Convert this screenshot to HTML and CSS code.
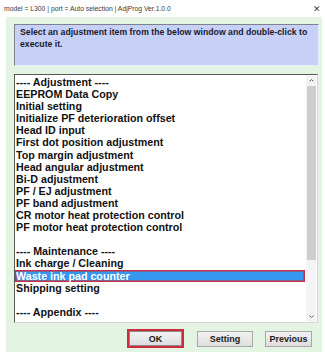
FILE: index.html
```html
<!DOCTYPE html>
<html>
<head>
<meta charset="utf-8">
<link rel="stylesheet" href="styles.css">
</head>
<body>
<div class="window">
  <div class="titlebar">
    <span class="title">model = L300 | port = Auto selection | AdjProg Ver.1.0.0</span>
    <span class="close">✕</span>
  </div>
  <div class="dialog">
    <div class="info">Select an adjustment item from the below window and double-click to execute it.</div>
    <div class="listbox">
      <ul class="items">
        <li>---- Adjustment ----</li>
        <li>EEPROM Data Copy</li>
        <li>Initial setting</li>
        <li>Initialize PF deterioration offset</li>
        <li>Head ID input</li>
        <li>First dot position adjustment</li>
        <li>Top margin adjustment</li>
        <li>Head angular adjustment</li>
        <li>Bi-D adjustment</li>
        <li>PF / EJ adjustment</li>
        <li>PF band adjustment</li>
        <li>CR motor heat protection control</li>
        <li>PF motor heat protection control</li>
        <li>&nbsp;</li>
        <li>---- Maintenance ----</li>
        <li>Ink charge / Cleaning</li>
        <li class="selected">Waste ink pad counter</li>
        <li>Shipping setting</li>
        <li>&nbsp;</li>
        <li>---- Appendix ----</li>
      </ul>
      <div class="scrollbar">
        <svg class="arrow" width="7" height="11" viewBox="0 0 7 11"><path d="M1.5 6.5 L3.5 4.5 L5.5 6.5" fill="none" stroke="#606060" stroke-width="1"/></svg>
        <div class="track"><div class="thumb"></div></div>
        <svg class="arrow" width="7" height="11" viewBox="0 0 7 11"><path d="M1.5 4.5 L3.5 6.5 L5.5 4.5" fill="none" stroke="#606060" stroke-width="1"/></svg>
      </div>
    </div>
    <div class="buttons">
      <div class="btn-outline"><button class="btn ok">OK</button></div>
      <button class="btn setting">Setting</button>
      <button class="btn previous">Previous</button>
    </div>
  </div>
</div>
</body>
</html>
```
FILE: styles.css
```css
html, body {
  margin: 0;
  padding: 0;
  background: #ffffff;
}
.window {
  width: 325px;
  height: 357px;
  overflow: hidden;
  font-family: "Liberation Sans", Arial, sans-serif;
}
.titlebar {
  height: 17px;
  display: flex;
  align-items: center;
  justify-content: space-between;
  padding: 0 4px 0 4px;
  font-family: "Liberation Sans", Arial, sans-serif;
  font-size: 6.8px;
  color: #3a3a3a;
}
.close {
  font-size: 9px;
  color: #444;
}
.dialog {
  margin-left: 6px;
  width: 316px;
  height: 335px;
  box-sizing: border-box;
  background: #e4f4e2;
  padding: 7px 3px 0 8px;
}
.info {
  height: 42px;
  box-sizing: border-box;
  background: #c7d0f7;
  border-top: 1px solid #7f8090;
  border-left: 1px solid #7f8090;
  border-right: 1px solid #e8ecfb;
  border-bottom: 1px solid #e8ecfb;
  padding: 1px 2px 0 5px;
  font-size: 8.7px;
  font-weight: bold;
  line-height: 12px;
  color: #1a1a2a;
}
.listbox {
  margin-top: 8px;
  width: 304px;
  height: 249px;
  box-sizing: border-box;
  background: #fff;
  border-top: 1px solid #5a5a5a;
  border-left: 1px solid #5a5a5a;
  border-right: 1px solid #d6d6d6;
  border-bottom: 1px solid #d6d6d6;
  display: flex;
}
.items {
  list-style: none;
  margin: 0;
  padding: 1px 0 0 0;
  flex: 1;
  font-size: 10.7px;
  font-weight: bold;
  line-height: 12.1px;
  color: #111;
}
.items li {
  padding-left: 1px;
  white-space: nowrap;
  height: 12.1px;
}
.items li.selected {
  background: #3597f0;
  color: #fff;
  box-shadow: inset 0 0 0 1.5px #c9303f;
  margin-right: 1px;
}
.scrollbar {
  width: 10px;
  display: flex;
  flex-direction: column;
  align-items: center;
  background: #f4f4f4;
  margin-right: 1px;
}
.arrow {
  display: block;
  flex: none;
}
.track {
  flex: 1;
  width: 9px;
}
.thumb {
  height: 174px;
  background: #cdcdcd;
}
.buttons {
  display: flex;
  align-items: center;
  margin-top: 6px;
  padding-left: 113px;
}
.btn-outline {
  width: 57px;
  height: 19px;
  box-sizing: border-box;
  border: 2px solid #cc2c3c;
  display: flex;
}
.btn {
  font-family: "Liberation Sans", Arial, sans-serif;
  font-size: 9px;
  font-weight: bold;
  color: #1a1a1a;
  background: linear-gradient(#f2f2f2, #dedede);
  border: 1px solid #a8a8a8;
  box-sizing: border-box;
  padding: 0;
  margin: 0;
}
.btn.ok {
  flex: 1;
  border-color: #8a8a8a;
}
.btn.setting {
  margin-left: 13px;
  width: 56px;
  height: 16px;
}
.btn.previous {
  margin-left: 12px;
  width: 47px;
  height: 16px;
}
```
